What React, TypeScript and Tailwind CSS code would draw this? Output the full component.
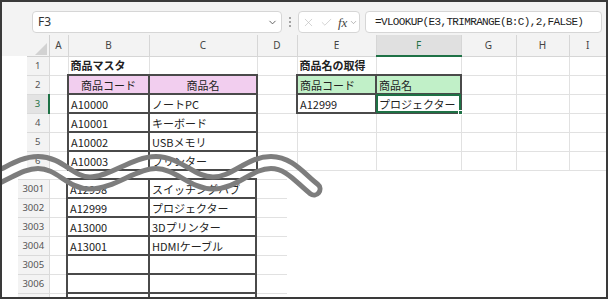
import React from "react";
import { ChevronDown, X, Check } from "lucide-react";

const wave =
  "M -22 182 C 0 182 16 162.5 38 162.5 C 60 162.5 70 183 90 183 C 112 183 134 162.5 156 162.5 C 178 162.5 192 183 213 183 C 235 183 249 162.5 271 162.5 C 289 162.5 300 178 314 189";

const dark = "border-2 border-[#4a4a4a]";
const light = "border border-[#e1e1e1]";
const rh = "border border-[#dadada] bg-[#f3f3f3] text-center text-[9.5px] text-[#555] font-['Noto_Sans',sans-serif]";

type C = { t?: string; c?: string };

export default function App() {
  const headers = ["A", "B", "C", "D", "E", "F", "G", "H", "I"];
  const e: C = {};
  const body: { n: string; cells: C[]; rhCls?: string }[] = [
    {
      n: "1",
      cells: [
        e,
        { t: "商品マスタ", c: `${light} font-bold` },
        e,
        e,
        { t: "商品名の取得", c: `${light} font-bold` },
        e,
        e,
        e,
        e,
      ],
    },
    {
      n: "2",
      cells: [
        e,
        { t: "商品コード", c: `${dark} bg-[#f2ceef] text-center` },
        { t: "商品名", c: `${dark} bg-[#f2ceef] text-center` },
        e,
        { t: "商品コード", c: `${dark} bg-[#c1f0c8]` },
        { t: "商品名", c: `${dark} bg-[#c1f0c8]` },
        e,
        e,
        e,
      ],
    },
    {
      n: "3",
      rhCls: "!bg-[#e3e3e3] !text-[#1e7145] !border-r-2 !border-r-[#1e7145]",
      cells: [
        e,
        { t: "A10000", c: dark },
        { t: "ノートPC", c: dark },
        e,
        { t: "A12999", c: dark },
        { t: "プロジェクター", c: `${dark} sel` },
        e,
        e,
        e,
      ],
    },
    { n: "4", cells: [e, { t: "A10001", c: dark }, { t: "キーボード", c: dark }, e, e, e, e, e, e] },
    { n: "5", cells: [e, { t: "A10002", c: dark }, { t: "USBメモリ", c: dark }, e, e, e, e, e, e] },
    { n: "6", cells: [e, { t: "A10003", c: dark }, { t: "プリンター", c: dark }, e, e, e, e, e, e] },
  ];

  const lower: { n: string; b?: string; c?: string }[] = [
    { n: "3001", b: "A12998", c: "スイッチングハブ" },
    { n: "3002", b: "A12999", c: "プロジェクター" },
    { n: "3003", b: "A13000", c: "3Dプリンター" },
    { n: "3004", b: "A13001", c: "HDMIケーブル" },
    { n: "3005" },
    { n: "3006" },
    { n: "" },
  ];

  return (
    <div className="relative h-[299px] w-[608px] overflow-hidden border-2 border-[#3a3a3a] bg-white font-['Noto_Sans_CJK_JP','Noto_Sans',sans-serif]">
      {/* formula bar */}
      <div className="flex h-[33px] items-start bg-[#f3f3f3] pl-[30px] pt-[9px]">
        <div className="flex h-[22px] w-[250px] items-center justify-between rounded-[4px] border border-[#d6d6d6] bg-white pl-[5px] pr-[3px]">
          <span className="font-['Noto_Sans',sans-serif] text-[12px] leading-none text-[#333]">F3</span>
          <ChevronDown size={11} strokeWidth={2} className="text-[#555]" />
        </div>
        <div className="flex h-[22px] w-[16px] items-center justify-center">
          <svg width="4" height="12" viewBox="0 0 4 12">
            <circle cx="2" cy="2" r="1" fill="#8a8a8a" />
            <circle cx="2" cy="6" r="1" fill="#8a8a8a" />
            <circle cx="2" cy="10" r="1" fill="#8a8a8a" />
          </svg>
        </div>
        <div className="flex h-[22px] w-[62px] items-center rounded-[4px] border border-[#d6d6d6] bg-white pl-[3px]">
          <X size={13} strokeWidth={1.2} className="text-[#bcbcbc]" />
          <Check size={13} strokeWidth={1.2} className="ml-[5px] text-[#bcbcbc]" />
          <span className="ml-[5px] font-['Liberation_Serif',serif] text-[13px] italic leading-none text-[#444]">
            fx
          </span>
          <ChevronDown size={9} strokeWidth={1.6} className="ml-[2px] text-[#888]" />
        </div>
        <div className="ml-[5px] flex h-[22px] w-[237px] items-center rounded-[4px] border border-[#d6d6d6] bg-white pl-[9px]">
          <span className="font-['Liberation_Mono',monospace] text-[11px] leading-none tracking-[-0.65px] text-[#222]">
            =VLOOKUP(E3,TRIMRANGE(B:C),2,FALSE)
          </span>
        </div>
      </div>

      {/* upper sheet */}
      <table className="w-[604px] table-fixed border-collapse">
        <colgroup>
          {[25, 22, 19, 81, 108, 40, 79, 85, 55, 53, 37].map((w, i) => (
            <col key={i} style={{ width: w }} />
          ))}
        </colgroup>
        <tbody>
          <tr className="h-[21px]">
            <td className="border-0 bg-[#f3f3f3] p-0" />
            <td className="relative border-0 border-b border-r border-[#d0d0d0] bg-[#f3f3f3] p-0">
              <svg className="absolute bottom-[1px] right-[2px]" width="12" height="12" viewBox="0 0 12 12">
                <polygon points="12,0 12,12 0,12" fill="#d2d2d2" />
              </svg>
            </td>
            {headers.map((h) => (
              <td
                key={h}
                className={`border-0 border-b border-r border-[#d6d6d6] p-0 text-center font-['Noto_Sans',sans-serif] text-[10px] leading-none ${
                  h === "F"
                    ? "!border-b-2 !border-b-[#1e7145] bg-[#e0e0e0] text-[#1e7145]"
                    : "bg-[#f3f3f3] text-[#444]"
                } ${h === "I" ? "border-r-0" : ""}`}
              >
                {h}
              </td>
            ))}
          </tr>
          {body.map((r) => (
            <tr key={r.n} className="h-[19px]">
              <td className="border-0 bg-white p-0" />
              <td className={`${rh} border-l-0 p-0 leading-none ${r.rhCls ?? ""}`}>{r.n}</td>
              {r.cells.map((cell, i) => {
                const isSel = cell.c?.includes("sel");
                return (
                  <td
                    key={i}
                    className={`relative whitespace-nowrap p-0 px-[2px] align-middle text-[11px] leading-[14px] text-[#222] ${
                      cell.c ?? light
                    } ${i === 8 ? "border-r-0" : ""}`}
                  >
                    {cell.t}
                    {isSel && (
                      <>
                        <div className="pointer-events-none absolute inset-[-1px] border-2 border-[#1e7145]" />
                        <div className="absolute bottom-[-3px] right-[-3px] h-[5px] w-[5px] border border-white bg-[#1e7145]" />
                      </>
                    )}
                  </td>
                );
              })}
            </tr>
          ))}
        </tbody>
      </table>

      {/* lower sheet */}
      <div className="mt-[7px] pl-[16px]">
        <table className="w-[269px] table-fixed border-collapse">
          <colgroup>
            {[31, 18, 82, 107, 31].map((w, i) => (
              <col key={i} style={{ width: w }} />
            ))}
          </colgroup>
          <tbody>
            {lower.map((r, idx) => (
              <tr key={idx} className="h-[19px]">
                <td className={`${rh} border-l-0 p-0 leading-none`}>{r.n}</td>
                <td className={`${light} p-0`} />
                <td className={`${dark} whitespace-nowrap p-0 px-[2px] text-[11px] leading-[14px] text-[#222]`}>{r.b}</td>
                <td className={`${dark} whitespace-nowrap p-0 px-[2px] text-[11px] leading-[14px] text-[#222]`}>{r.c}</td>
                <td className={`${light} border-r-0 p-0`} />
              </tr>
            ))}
          </tbody>
        </table>
      </div>

      {/* wave break */}
      <svg
        className="pointer-events-none absolute left-[-2px] top-[-2px]"
        width="608"
        height="299"
        viewBox="0 0 608 299"
      >
        <defs>
          <mask id="wm" maskUnits="userSpaceOnUse" x="0" y="0" width="608" height="299">
            <rect x="0" y="0" width="608" height="299" fill="white" />
            <path d={wave} stroke="black" strokeWidth="7" fill="none" strokeLinecap="round" />
          </mask>
        </defs>
        <path d={wave} stroke="#7d7d7d" strokeWidth="17" fill="none" strokeLinecap="round" mask="url(#wm)" />
      </svg>
    </div>
  );
}
